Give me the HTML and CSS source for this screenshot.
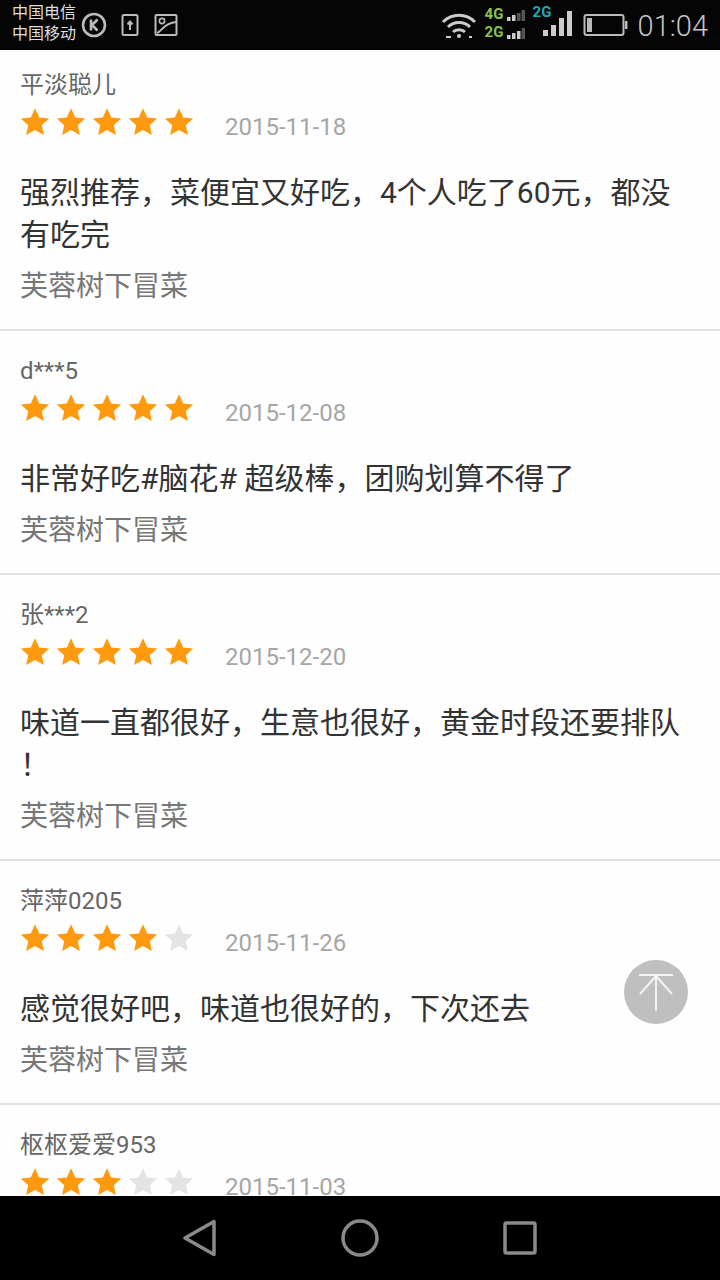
FILE: index.html
```html
<!DOCTYPE html>
<html lang="zh-CN">
<head>
	<meta charset="UTF-8">
	<meta content="width=device-width, initial-scale=1.0" name="viewport">
	<title>评价</title>
	<link rel="stylesheet" href="styles.css">
</head>
<body>
<svg class="defs" width="0" height="0">
	<symbol id="star" viewBox="0 0 30 30">
		<path d="M15 1.2l4.2 9.2 10 1.1-7.4 6.7 2.1 9.9-8.9-5.1-8.9 5.1 2.1-9.9L.8 11.5l10-1.1z"/>
	</symbol>
</svg>
<div class="app">
	<div class="status">
		<div class="carrier"><span>中国电信</span><span>中国移动</span></div>
		<svg class="ic-k" width="26" height="26" viewBox="0 0 26 26" fill="none" stroke="#bbb">
			<circle cx="13" cy="13" r="11" stroke-width="2.6"/>
			<path d="M10 7.5v11M16.5 7.5l-5.5 5.5 5.5 5.5" stroke-width="2.6"/>
		</svg>
		<svg class="ic-up" width="18" height="24" viewBox="0 0 18 24" fill="none" stroke="#bbb">
			<rect x="1.5" y="2" width="15" height="20" rx="1.5" stroke-width="2"/>
			<path d="M9 17V9M6.5 11.5L9 8.5l2.5 3" stroke-width="2"/>
		</svg>
		<svg class="ic-pic" width="24" height="24" viewBox="0 0 24 24" fill="none" stroke="#bbb">
			<rect x="1.5" y="2" width="21" height="20" rx="1" stroke-width="2"/>
			<circle cx="8" cy="8" r="2.6" stroke-width="1.6"/>
			<path d="M3 20C8 18 10 10 22 9" stroke-width="2"/>
		</svg>
		<div class="status-right">
			<svg class="ic-wifi" width="36" height="28" viewBox="0 0 36 28" fill="none" stroke="#ccc" stroke-width="3">
				<path d="M2 11C11 2 25 2 34 11M7 16c6-6 16-6 22 0M12 21c3-3 9-3 12 0"/>
				<circle cx="18" cy="25" r="2" fill="#ccc" stroke="none"/>
				<path d="M5 26h5M28 26h3" stroke-width="2"/>
			</svg>
			<div class="net">
				<div class="net-row"><span class="tag-g">4G</span>
					<svg width="22" height="18" viewBox="0 0 22 18" fill="#555"><rect x="4" y="13" width="3.500" height="4" fill="#ccc"/><rect x="9" y="11" width="3.500" height="6" fill="#ccc"/><rect x="14" y="9" width="3.500" height="8"/><rect x="18.500" y="6" width="3.500" height="11"/></svg>
				</div>
				<div class="net-row"><span class="tag-g">2G</span>
					<svg width="22" height="18" viewBox="0 0 22 18" fill="#555"><rect x="4" y="13" width="3.500" height="4" fill="#ccc"/><rect x="9" y="11" width="3.500" height="6" fill="#ccc"/><rect x="14" y="9" width="3.500" height="8" fill="#ccc"/><rect x="18.500" y="6" width="3.500" height="11"/></svg>
				</div>
			</div>
			<div class="sim2">
				<span class="tag-b">2G</span>
				<svg width="30" height="28" viewBox="0 0 30 28" fill="#ccc"><rect x="0" y="19" width="5" height="6"/><rect x="8" y="14" width="5" height="11"/><rect x="16" y="7" width="5" height="18"/><rect x="24" y="0" width="5" height="25"/></svg>
			</div>
			<svg class="ic-bat" width="45" height="24" viewBox="0 0 45 24" fill="none">
				<rect x="1.5" y="2" width="39" height="20" rx="2" stroke="#bbb" stroke-width="2"/>
				<rect x="4" y="5" width="5" height="14" fill="#bbb"/>
				<rect x="42" y="8" width="2.5" height="8" fill="#bbb"/>
			</svg>
			<span class="time">01:04</span>
		</div>
	</div>

	<div class="list">
		<div class="card first">
			<div class="name">平淡聪儿</div>
			<div class="meta">
				<div class="stars">
					<svg class="star on"><use href="#star"/></svg><svg class="star on"><use href="#star"/></svg><svg class="star on"><use href="#star"/></svg><svg class="star on"><use href="#star"/></svg><svg class="star on"><use href="#star"/></svg>
				</div>
				<span class="date">2015-11-18</span>
			</div>
			<p class="txt">强烈推荐，菜便宜又好吃，4个人吃了60元，都没<br>有吃完</p>
			<div class="shop">芙蓉树下冒菜</div>
		</div>
		<div class="card">
			<div class="name">d***5</div>
			<div class="meta">
				<div class="stars">
					<svg class="star on"><use href="#star"/></svg><svg class="star on"><use href="#star"/></svg><svg class="star on"><use href="#star"/></svg><svg class="star on"><use href="#star"/></svg><svg class="star on"><use href="#star"/></svg>
				</div>
				<span class="date">2015-12-08</span>
			</div>
			<p class="txt">非常好吃#脑花# 超级棒，团购划算不得了</p>
			<div class="shop">芙蓉树下冒菜</div>
		</div>
		<div class="card">
			<div class="name">张***2</div>
			<div class="meta">
				<div class="stars">
					<svg class="star on"><use href="#star"/></svg><svg class="star on"><use href="#star"/></svg><svg class="star on"><use href="#star"/></svg><svg class="star on"><use href="#star"/></svg><svg class="star on"><use href="#star"/></svg>
				</div>
				<span class="date">2015-12-20</span>
			</div>
			<p class="txt">味道一直都很好，生意也很好，黄金时段还要排队<br>！</p>
			<div class="shop">芙蓉树下冒菜</div>
		</div>
		<div class="card">
			<div class="name">萍萍0205</div>
			<div class="meta">
				<div class="stars">
					<svg class="star on"><use href="#star"/></svg><svg class="star on"><use href="#star"/></svg><svg class="star on"><use href="#star"/></svg><svg class="star on"><use href="#star"/></svg><svg class="star"><use href="#star"/></svg>
				</div>
				<span class="date">2015-11-26</span>
			</div>
			<p class="txt">感觉很好吧，味道也很好的，下次还去</p>
			<div class="shop">芙蓉树下冒菜</div>
		</div>
		<div class="card">
			<div class="name">枢枢爱爱953</div>
			<div class="meta">
				<div class="stars">
					<svg class="star on"><use href="#star"/></svg><svg class="star on"><use href="#star"/></svg><svg class="star on"><use href="#star"/></svg><svg class="star"><use href="#star"/></svg><svg class="star"><use href="#star"/></svg>
				</div>
				<span class="date">2015-11-03</span>
			</div>
		</div>
		<div class="top-btn">
			<svg width="36" height="40" viewBox="0 0 36 40" fill="none" stroke="#f4f4f4" stroke-width="2">
				<path d="M1 3h34M18 3v36M18 4L2 22M18 4l16 18"/>
			</svg>
		</div>
	</div>

	<div class="nav">
		<svg width="34" height="38" viewBox="0 0 34 38" fill="none" stroke="#8a8a8a" stroke-width="3.5" stroke-linejoin="round"><path d="M31 2.500v33L2 19z"/></svg>
		<svg width="38" height="38" viewBox="0 0 38 38" fill="none" stroke="#8a8a8a" stroke-width="3.500"><circle cx="19" cy="19" r="17"/></svg>
		<svg width="34" height="34" viewBox="0 0 34 34" fill="none" stroke="#8a8a8a" stroke-width="3.500" stroke-linejoin="round"><rect x="2" y="2" width="30" height="30" rx="1.500"/></svg>
	</div>
</div>
</body>
</html>
```

FILE: styles.css
```css
* {
	box-sizing: border-box;
}
body {
	margin: 0;
	background: #000;
	font-family: Roboto, "Noto Sans CJK SC", sans-serif;
}
.defs {
	display: block;
	height: 0;
}
.app {
	width: 720px;
	height: 1280px;
	display: flex;
	flex-direction: column;
	overflow: hidden;
}

/* status bar */
.status {
	height: 50px;
	flex: none;
	display: flex;
	align-items: center;
	padding: 0 12px;
	background: #050505;
	color: #ccc;
}
.carrier {
	display: flex;
	flex-direction: column;
	width: 64px;
	margin-bottom: 4px;
	font-size: 16px;
	line-height: 21px;
	color: #ddd;
}
.ic-k {
	margin-left: 5px;
}
.ic-up {
	margin-left: 14px;
}
.ic-pic {
	margin-left: 15px;
}
.status-right {
	margin-left: auto;
	display: flex;
	align-items: center;
}
.net {
	margin-left: 8px;
	margin-bottom: 6px;
	display: flex;
	flex-direction: column;
}
.net-row {
	display: flex;
	align-items: flex-end;
	height: 18px;
}
.tag-g,
.tag-b {
	font-size: 15px;
	font-weight: 700;
	line-height: 16px;
	width: 18px;
}
.tag-g {
	color: #8bc34a;
}
.tag-b {
	color: #26a6b5;
	position: absolute;
	top: -7px;
	left: -10px;
}
.sim2 {
	position: relative;
	margin-left: 18px;
	height: 28px;
}
.ic-bat {
	margin-left: 10px;
}
.time {
	margin-left: 10px;
	margin-top: 2px;
	font-size: 29px;
	font-weight: 300;
	color: #c4c4c4;
}

/* review list */
.list {
	flex: 1;
	position: relative;
	overflow: hidden;
	background: #fefefe;
}
.card {
	padding: 24px 20px 24px;
	border-bottom: 2px solid #dedede;
}
.card.first {
	padding-top: 19px;
}
.name {
	font-size: 24px;
	line-height: 32px;
	color: #666;
}
.meta {
	display: flex;
	align-items: flex-start;
	margin-top: 3px;
}
.stars {
	display: flex;
	gap: 6px;
	padding-top: 3px;
	width: 205px;
}
.star {
	width: 30px;
	height: 30px;
	fill: #e4e4e2;
}
.star.on {
	fill: #ff9a0e;
}
.date {
	font-size: 24px;
	line-height: 36px;
	padding-top: 5px;
	color: #a6a6a6;
}
.txt {
	margin: 27px 0 0;
	font-size: 30px;
	line-height: 42px;
	color: #333;
}
.shop {
	margin-top: 13px;
	font-size: 28px;
	line-height: 36px;
	color: #777;
}
.top-btn {
	position: absolute;
	left: 624px;
	top: 910px;
	width: 64px;
	height: 64px;
	border-radius: 50%;
	background: #bfbfbf;
	display: flex;
	align-items: center;
	justify-content: center;
}

/* bottom nav */
.nav {
	height: 84px;
	flex: none;
	background: #000;
	display: flex;
	align-items: center;
	padding: 0 183px;
	justify-content: space-between;
}
```
